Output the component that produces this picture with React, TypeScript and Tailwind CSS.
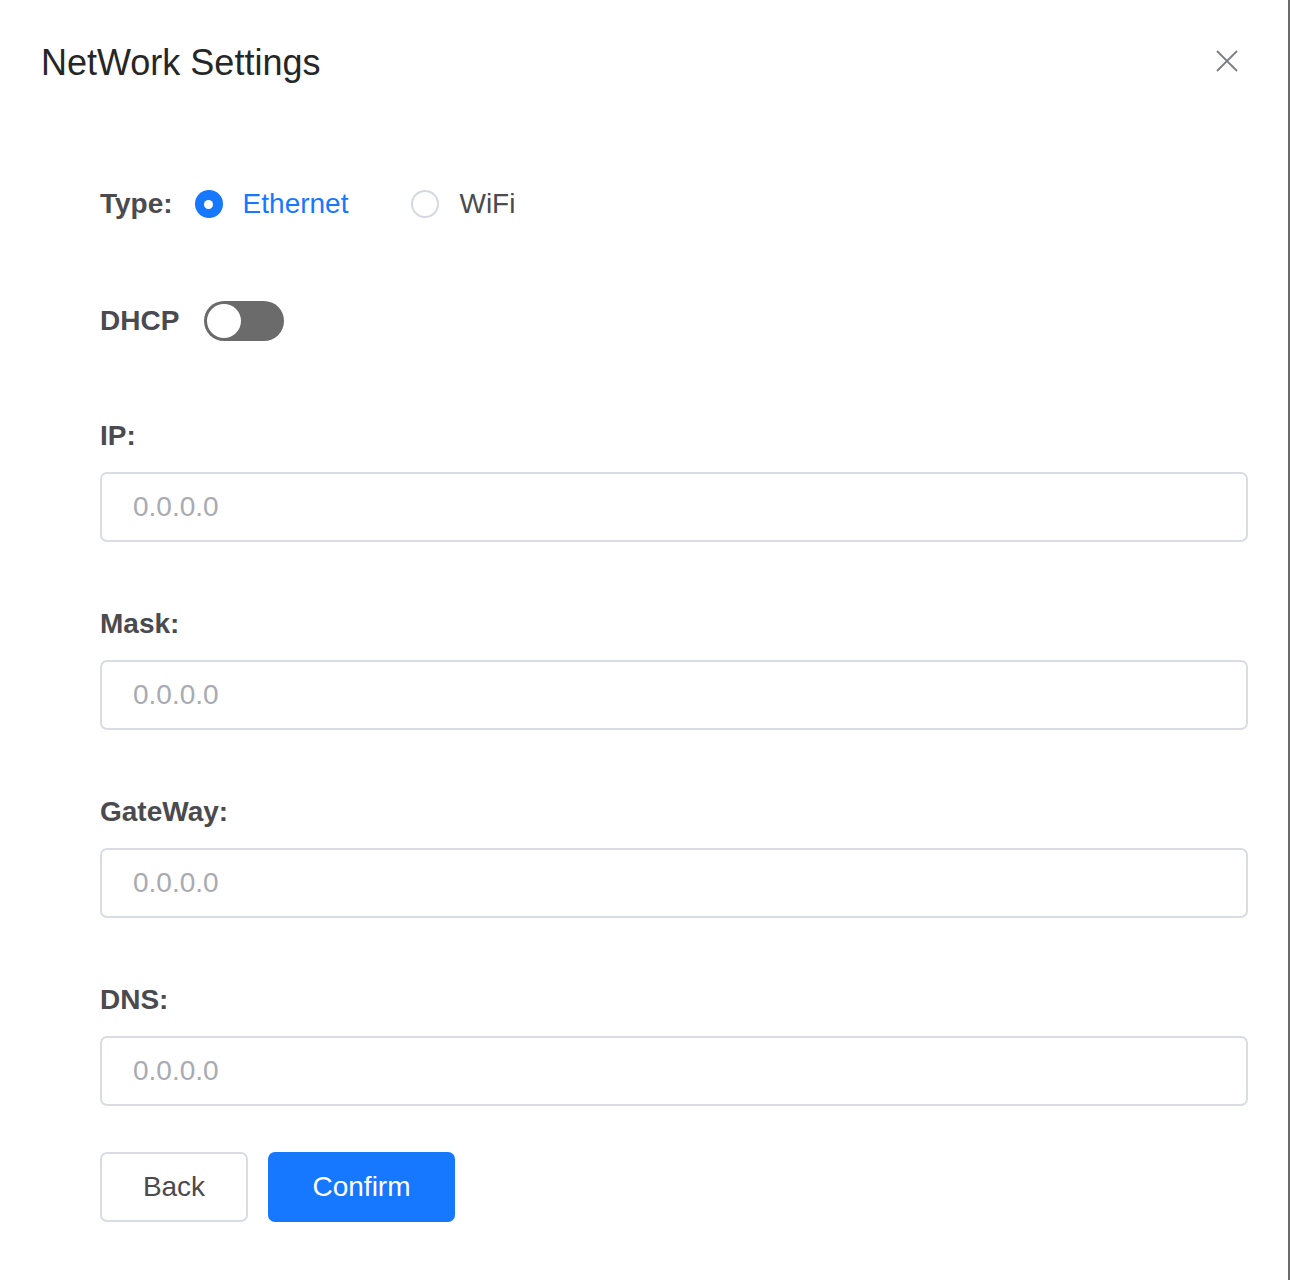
import { useState } from "react";

// Network settings dialog

const fields = ["IP:", "Mask:", "GateWay:", "DNS:"];

function CloseIcon() {
  return (
    <svg width="22" height="22" viewBox="0 0 22 22" fill="none">
      <path d="M1 1L21 21M21 1L1 21" stroke="#7d7e83" strokeWidth="1.8" />
    </svg>
  );
}

function Radio({ checked, label, onClick }: { checked: boolean; label: string; onClick: () => void }) {
  return (
    <button type="button" onClick={onClick} className="flex items-center gap-[20px]">
      {checked ? (
        <span className="w-[28px] h-[28px] rounded-full bg-[#1677ff] flex items-center justify-center">
          <span className="w-[9px] h-[9px] rounded-full bg-white" />
        </span>
      ) : (
        <span className="w-[28px] h-[28px] rounded-full border-2 border-[#d5d8e0] bg-white" />
      )}
      <span className={checked ? "text-[#1677ff]" : "text-[#4a4a4f]"}>{label}</span>
    </button>
  );
}

export default function App() {
  const [type, setType] = useState("ethernet");
  const [dhcp, setDhcp] = useState(false);

  return (
    <div
      className="w-full h-[1280px] bg-white border-r-2 border-[#6b6b6b]"
      style={{ fontFamily: '"Liberation Sans", Arial, sans-serif' }}
    >
      {/* Header */}
      <div className="flex items-center justify-between pl-[41px] pr-[50px] pt-[42px]">
        <h1 className="text-[36px] leading-[42px] text-[#262626]">NetWork Settings</h1>
        <button type="button" className="-mt-[4px]">
          <CloseIcon />
        </button>
      </div>

      <div className="pl-[100px] pr-[40px]">
        {/* Type */}
        <div className="mt-[100px] h-[40px] flex items-center text-[28px]">
          <span className="font-bold text-[#4a4a4f] mr-[22px]">Type:</span>
          <Radio checked={type === "ethernet"} label="Ethernet" onClick={() => setType("ethernet")} />
          <span className="w-[63px]" />
          <Radio checked={type === "wifi"} label="WiFi" onClick={() => setType("wifi")} />
        </div>

        {/* DHCP */}
        <div className="mt-[77px] h-[40px] flex items-center">
          <span className="text-[28px] font-bold text-[#4a4a4f] mr-[25px]">DHCP</span>
          <button
            type="button"
            onClick={() => setDhcp(!dhcp)}
            className={`w-[80px] h-[40px] rounded-full p-[3px] flex ${dhcp ? "bg-[#1677ff] justify-end" : "bg-[#6b6b6b] justify-start"}`}
          >
            <span className="w-[34px] h-[34px] rounded-full bg-white" />
          </button>
        </div>

        {/* Fields */}
        {fields.map((f, i) => (
          <div key={f} className={i === 0 ? "mt-[79px]" : "mt-[66px]"}>
            <div className="text-[28px] leading-[32px] font-bold text-[#4a4a4f]">{f}</div>
            <input
              placeholder="0.0.0.0"
              className="mt-[20px] w-full h-[70px] rounded-[7px] border-2 border-[#d9dce3] px-[31px] text-[28px] text-[#4a4a4f] placeholder:text-[#a8abb2] outline-none"
            />
          </div>
        ))}

        {/* Actions */}
        <div className="mt-[46px] flex gap-[20px]">
          <button
            type="button"
            className="w-[148px] h-[70px] rounded-[7px] border-2 border-[#d9dce3] bg-white text-[28px] text-[#4a4a4f]"
          >
            Back
          </button>
          <button type="button" className="w-[187px] h-[70px] rounded-[7px] bg-[#1677ff] text-[28px] text-white">
            Confirm
          </button>
        </div>
      </div>
    </div>
  );
}
